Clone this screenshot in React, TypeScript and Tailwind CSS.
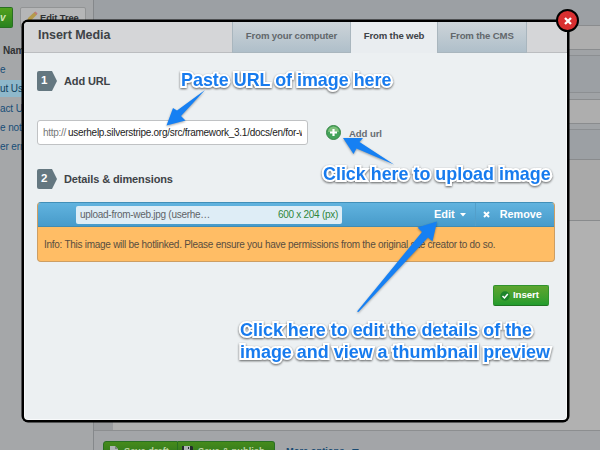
import React from "react";

function Note({ className, children }: { className: string; children: React.ReactNode }) {
  return (
    <div
      className={`absolute whitespace-nowrap font-bold text-[#177bee] [-webkit-text-stroke:4px_white] [paint-order:stroke_fill] [filter:drop-shadow(0_1.5px_1px_rgba(0,0,0,0.6))] ${className}`}
    >
      {children}
    </div>
  );
}

function Step({ n, title }: { n: string; title: string }) {
  return (
    <div className="flex h-5 items-center">
      <div className="flex h-5 w-5 items-center rounded-l-[2px] bg-[#647780] pl-1 text-[11.5px] font-bold text-white [clip-path:polygon(0_0,75%_0,100%_50%,75%_100%,0_100%)]">
        {n}
      </div>
      <h2 className="ml-[7px] text-[11px] font-bold tracking-[-0.12px]">{title}</h2>
    </div>
  );
}

function Backdrop() {
  return (
    <div className="flex h-[450px] w-[600px] bg-[#a5a7a9]">
      <aside className="w-[93px] shrink-0 overflow-hidden text-[10px] tracking-[-0.1px]">
        <div className="flex h-7 items-start gap-[7px] pt-[7px]">
          <div className="flex h-[21px] w-[13px] items-center rounded-r-[2px] border border-l-0 border-[#286f22] bg-linear-to-b from-[#51a01d] to-[#27831e] text-[10px] font-bold italic text-[#d2e8b4]">v</div>
          <div className="flex h-[21px] w-[66px] items-start rounded-[2px] border border-[#929495] bg-[#b5b6b7] pl-[5px] pt-[3px] font-bold leading-[13px] text-[#303234]">
            <svg className="mr-[2px] h-[12px] w-[12px] shrink-0" viewBox="0 0 12 12">
              <path d="M1 11 2 7 8.5 1 11 3.5 5 9.5Z" fill="#b49a4b" />
              <path d="m8 1.5 1.5-1 2 2-1 1.5Z" fill="#bd7b7b" />
              <path d="m1 11 .5-2 1.5 1.3Z" fill="#555" />
            </svg>
            <span className="whitespace-nowrap text-[9.4px]">Edit Tree</span>
          </div>
        </div>
        <div className="mt-3 flex h-5 items-center whitespace-nowrap pl-[3px] font-bold text-[#303234]">Nam</div>
        <ul className="whitespace-nowrap text-[#164d77]">
          <li className="flex h-[18px] items-center">e</li>
          <li className="mt-[2px] flex h-[17px] items-center bg-[#8fb8cb] text-[#103f5e]">ut Us</li>
          <li className="mt-[2px] flex h-[18px] items-center">act U</li>
          <li className="mt-[1px] flex h-[18px] items-center">e not f</li>
          <li className="mt-[1px] flex h-[18px] items-center">er err</li>
        </ul>
      </aside>
      <main className="flex min-w-0 flex-1 flex-col border-l border-[#85888b] bg-[#9ca0a4]">
        <div className="h-[25px]" />
        <div className="h-[25px] border-y border-[#8a8c8e] bg-[#aeaeae]" />
        <div className="h-[6px] border-b border-[#8c8f92] bg-[#a0a3a6]" />
        <div className="h-[36px]" />
        <div className="h-[7px] border-t border-[#8c8f92] bg-[#a0a3a6]" />
        <div className="h-[25px] border-y border-[#8a8c8e] bg-[#aeaeae]" />
        <div className="h-[6px] border-b border-[#8c8f92] bg-[#a0a3a6]" />
        <div className="h-[29px]" />
        <div className="h-[62px] border-y border-[#898b8d] bg-[#a9a9a9]" />
        <div className="flex h-[210px] border-b border-[#8c8e90]">
          <div className="w-[19px] bg-[#9a9c9f]" />
          <div className="flex-1 bg-[#b1b1b1]" />
        </div>
        <div className="flex min-h-0 flex-1 items-start overflow-hidden bg-[#a3a5a8] pl-[9px] pt-[10px] text-[9.3px] font-bold">
          <div className="flex h-5 w-[75px] shrink-0 items-start rounded-tl-[3px] border border-[#286f22] bg-linear-to-b from-[#468b1b] to-[#27701e] pl-[6px] pt-[4px] leading-[11px] text-[#bdd4a2]">
            <svg className="mr-[6px] h-[9px] w-2" viewBox="0 0 8 9"><path d="M0 0h5l3 3v6H0Z" fill="#aeb4b3" /><path d="M5 0v3h3" fill="#78817e" /></svg>
            <span className="whitespace-nowrap">Save draft</span>
          </div>
          <div className="flex h-5 w-[97px] shrink-0 items-start rounded-tr-[3px] border border-l-0 border-[#286f22] bg-linear-to-b from-[#468b1b] to-[#27701e] pl-[4px] pt-[4px] leading-[11px] text-[#bdd4a2]">
            <svg className="mr-[5px] h-[11px] w-[11px]" viewBox="0 0 11 11"><path d="M0 0h10l1 1v10H0Z" fill="#252c2d" /><path d="M2 0h6v4H2Z" fill="#afb5b6" /><path d="M6 1h1v2H6Z" fill="#252c2d" /></svg>
            <span className="whitespace-nowrap">Save &amp; publish</span>
          </div>
          <div className="ml-[11px] flex items-start gap-2 pt-[5px] leading-[11px] text-[#184a72]">
            <span className="whitespace-nowrap">More options</span>
            <svg className="mt-[2px] h-2 w-2" viewBox="0 0 8 8"><path d="M0 1h7L3.5 6Z" fill="#184a72" /></svg>
          </div>
        </div>
      </main>
    </div>
  );
}

function Dialog() {
  return (
    <section className="absolute left-[22px] top-[20px] flex h-[402px] w-[547px] flex-col rounded-[6px] border-2 border-black bg-[#ecf0f2] text-[#3e4347] shadow-[0_0_0_0.5px_#000,inset_0_0_0_1px_#f8fafb]">
      <header className="flex h-[31px] shrink-0 rounded-t-[4px] bg-[#d5d6d8]">
        <h1 className="w-[208px] border-b border-[#bbbdc0] pl-[14px] pt-[5px] text-[12.5px] font-bold leading-[17px] tracking-[-0.05px]">Insert Media</h1>
        <div className="flex w-[119px] justify-center border border-t-0 border-[#a9b6be] bg-linear-to-b from-[#cdd4d9] to-[#afbfca] pt-[7px] text-[9.6px] font-bold leading-[14px] tracking-[-0.14px] text-[#62676b]">From your computer</div>
        <div className="flex w-[86px] justify-center bg-[#e9edf0] pt-[7px] text-[9.6px] font-bold leading-[14px] tracking-[-0.14px]">From the web</div>
        <div className="flex w-[90px] justify-center border border-t-0 border-[#a9b6be] bg-linear-to-b from-[#cdd4d9] to-[#afbfca] pt-[7px] text-[9.6px] font-bold leading-[14px] tracking-[-0.14px] text-[#62676b]">From the CMS</div>
        <div className="flex-1 border-b border-[#bbbdc0]" />
      </header>
      <div className="px-[13px] pt-[18px]">
        <Step n="1" title="Add URL" />
        <div className="mt-[29px] flex items-center">
          <div className="flex h-[25px] w-[271px] items-center rounded-[3px] border border-[#c0c2c4] bg-white pl-[5px] pr-[5px] text-[10px] tracking-[-0.28px]">
            <span className="w-[25px] shrink-0 text-[#777]">http://</span>
            <span className="min-w-0 flex-1 overflow-hidden whitespace-nowrap text-[#222]">userhelp.silverstripe.org/src/framework_3.1/docs/en/for-w</span>
          </div>
          <svg className="ml-[18px] h-[15px] w-[15px]" viewBox="0 0 15 15">
            <circle cx="7.5" cy="7.5" r="7" fill="#43a35a" stroke="#398746" />
            <path d="M2 7a5.5 5.5 0 0 1 11 0Z" fill="#7fc07c" />
            <path d="M7.5 4v7M4 7.5h7" stroke="white" strokeWidth="2.2" />
          </svg>
          <span className="ml-[8px] pt-[2px] text-[9.6px] font-bold leading-[12px] tracking-[-0.1px] text-[#686d72]">Add url</span>
        </div>
        <div className="mt-[24px]"><Step n="2" title="Details & dimensions" /></div>
        <div className="mt-[13px] h-[60px] w-[518px] overflow-hidden rounded-[4px] border border-[#cd9e63] border-t-[#418fb8] bg-[#ffbd65]">
          <div className="flex h-[24px] items-center border-b border-[#428bb1] bg-linear-to-b from-[#61b3df] to-[#479bca] pl-[38px]">
            <div className="flex h-[18px] w-[266px] items-center justify-between rounded-[2px] bg-[#deedf6] pl-[4px] pr-[4px] text-[10px] tracking-[-0.28px]">
              <span className="text-[#5f6468]">upload-from-web.jpg (userhe…</span>
              <span className="text-[#30863b]">600 x 204 (px)</span>
            </div>
            <span className="ml-[92px] text-[11px] font-bold text-white">Edit</span>
            <svg className="ml-[5px] h-[4px] w-[6px]" viewBox="0 0 6 4"><path d="M0 0h6L3 3.5Z" fill="white" /></svg>
            <div className="ml-[9px] h-full border-l border-[#539fca]" />
            <svg className="ml-[7px] h-[7px] w-[7px]" viewBox="0 0 7 7"><path d="m1 1 5 5m0-5-5 5" stroke="white" strokeWidth="2" /></svg>
            <span className="ml-[10px] text-[10.8px] font-bold text-white">Remove</span>
          </div>
          <p className="flex h-[34px] items-center whitespace-nowrap pl-[6px] text-[10px] tracking-[-0.27px] text-[#594d3f]">Info: This image will be hotlinked. Please ensure you have permissions from the original site creator to do so.</p>
        </div>
        <div className="mt-[23px] flex h-[21px] pl-[456px]">
          <div className="flex w-[56px] items-center rounded-[2px] border border-[#2f932d] border-b-[#217323] bg-linear-to-b from-[#5da52f] to-[#219c2e] pl-[6px] text-[9.7px] font-bold tracking-[-0.1px] text-white">
            <svg className="mr-[3px] h-[10px] w-[10px] shrink-0" viewBox="0 0 10 10"><circle cx="5" cy="5" r="4.7" fill="#1c842b" /><path d="m2.5 5 2 2 3.3-4" fill="none" stroke="white" strokeWidth="1.5" /></svg>
            Insert
          </div>
        </div>
      </div>
    </section>
  );
}

export default function App() {
  return (
    <div className="relative h-[450px] w-[600px] overflow-hidden font-['Liberation_Sans',Arial,sans-serif]">
      <Backdrop />
      <Dialog />
      <div className="absolute left-[556px] top-[9px] flex h-[23px] w-[23px] items-center justify-center rounded-full border-[2.5px] border-black bg-[#d92f31]">
        <svg className="h-[8px] w-[8px]" viewBox="0 0 8 8"><path d="m1 1 6 6m0-6L1 7" stroke="white" strokeWidth="2.3" /></svg>
      </div>
      <svg className="absolute left-0 top-0 h-[450px] w-[600px] [filter:drop-shadow(0_1px_1px_rgba(0,0,0,0.35))]" viewBox="0 0 600 450">
        <g fill="#1680f3">
          <path d="M205 90 177 110.5 173 108 166.5 125.5 185.5 120.5 181 116Z" />
          <path d="M343 138 363 138 359.5 142 394 164.5 356.5 148.5 353.5 154Z" />
          <path d="M437 221.5 417.5 227.5 422 232 357 311.5 358.5 312 428 237.5 432.5 241.5Z" />
        </g>
      </svg>
      <Note className="left-[181px] top-[69px] text-[17.9px] leading-[22px]">Paste URL of image here</Note>
      <Note className="left-[323px] top-[163px] text-[17.9px] leading-[22px]">Click here to upload image</Note>
      <Note className="left-[240px] top-[319px] text-[17.95px] leading-[22px]">Click here to edit the details of the<br />image and view a thumbnail preview</Note>
    </div>
  );
}
